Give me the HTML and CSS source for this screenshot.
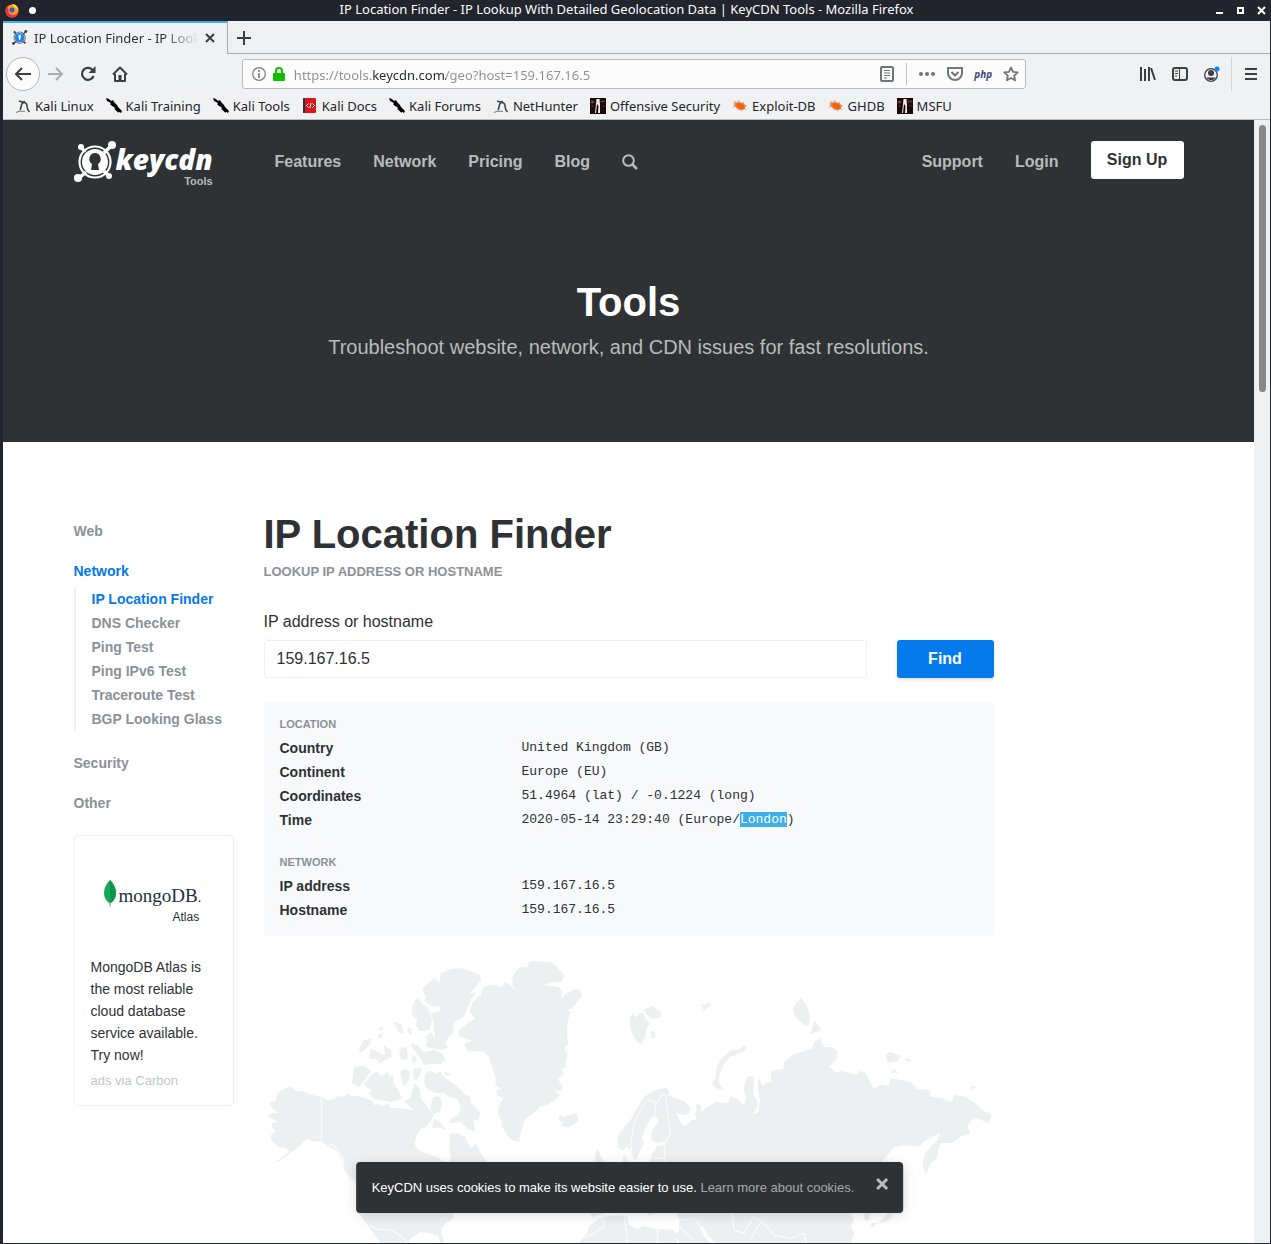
FILE: index.html
```html
<!DOCTYPE html>
<html lang="en">
<head>
<meta charset="utf-8">
<meta name="viewport" content="width=device-width, initial-scale=1">
<title>IP Location Finder - IP Lookup With Detailed Geolocation Data | KeyCDN Tools</title>
<link rel="stylesheet" href="styles.css">
</head>
<body>
<svg class="defs" aria-hidden="true">
  <defs>
    <symbol id="kali" viewBox="0 0 16 16"><path d="M4 3 7 4 10 3.500M7 5.500C9 3 12 5 12 8c0 3 .5 4 2.500 6M7 5.500c-1 2-.7 4-2 6.500" fill="none" stroke="#444" stroke-width="1.600"/><path d="M1 14.500c3-1.500 7-1.500 9-1" fill="none" stroke="#888" stroke-width="1.200"/></symbol>
    <symbol id="knife" viewBox="0 0 16 16"><path d="M0 0 3 1 5 3 7 2 8 4 11 7 12 9 16 13 15 15 12 13 8 9 6 8 4 6 5 5 1 3Z" fill="#000"/><path d="M9 10 13 14" stroke="#000" stroke-width="2"/></symbol>
    <symbol id="docs" viewBox="0 0 16 16"><rect x="1" width="13" height="15" rx="1" fill="#d8141c"/><path d="M1 0h2v15H1z" fill="#26324f"/><path d="M6.500 5.500 4.500 7.500 6.500 9.500M10.500 5.500 12.500 7.500 10.500 9.500M9 5 8 10" fill="none" stroke="#fff"/></symbol>
    <symbol id="offsec" viewBox="0 0 16 16"><path d="M0 0h16v16H0z" fill="#1b0909"/><path d="M1 3h3v2H1zM11 3h4v1h-4zM1 8h3M12 8h3" fill="#786060" stroke="#5c2a2a"/><path d="M6.500 1h3l.5 6v8H8l.5-7L7 6l-1 9H5l1-9z" fill="#eee"/></symbol>
    <symbol id="bug" viewBox="0 0 16 16"><ellipse cx="8" cy="8" rx="5.500" ry="3.500" transform="rotate(22 8 8)" fill="#ee6411"/><path d="M2 3 5 6 1 6M6 2 8 5M1 9 5 8M6 12 7 9M10 13 9 11M14 12 12 10M11 4 12 7 15 8" fill="none" stroke="#f08a4c"/></symbol>
    <symbol id="keyhole" viewBox="0 0 44 44"><g fill="none" stroke="currentColor"><circle cx="21" cy="21" r="15.500" stroke-width="2.200"/><path d="M7 6 11 11M37 5 30 12M4 38 12 31M35 35 30 30" stroke-width="3.600"/></g><g fill="currentColor"><circle cx="7" cy="6" r="3"/><circle cx="38" cy="4" r="4"/><circle cx="4" cy="37" r="4"/><circle cx="35" cy="35" r="3"/></g></symbol>
  </defs>
</svg>

<div class="window">
  <header class="titlebar">
    <div class="titlebar-side">
      <svg width="14" height="14" viewBox="0 0 14 14" aria-hidden="true"><circle cx="7" cy="7" r="6.500" fill="#ff9a1f"/><path d="M1 4C0 10 3 13.500 7 13.500s6.500-3 6.500-7c-1 3-3 5-6 4.500S3 8 3.500 5L2 2Z" fill="#f0304a"/><circle cx="7" cy="6" r="2.500" fill="#3454c8"/><path d="M7 0c3 0 6 2 6.500 6C12 4 10 4 9 3Z" fill="#ffdc3c"/></svg>
      <span class="dot"></span>
    </div>
    <div class="titlebar-text">IP Location Finder - IP Lookup With Detailed Geolocation Data | KeyCDN Tools - Mozilla Firefox</div>
    <div class="titlebar-side titlebar-buttons">
      <button aria-label="Minimize"><svg width="9" height="9"><path d="M1 7h7" stroke="#fff" stroke-width="2"/></svg></button>
      <button aria-label="Maximize"><svg width="9" height="9"><rect x="2" y="2" width="5" height="5" fill="none" stroke="#fff" stroke-width="2"/></svg></button>
      <button aria-label="Close window"><svg width="9" height="9"><path d="M1 1 8 8M8 1 1 8" stroke="#fff" stroke-width="2"/></svg></button>
    </div>
  </header>

  <div class="tabbar">
    <div class="tab">
      <svg class="tab-icon" width="16" height="16" viewBox="0 0 44 44" aria-hidden="true"><g color="#3c4248"><use href="#keyhole"/></g><circle cx="21" cy="21" r="13" fill="#1d84f0"/><path d="M18 13h6v8l-2 7h-2l-2-7z" fill="#fff"/></svg>
      <span class="tab-title">IP Location Finder - IP Look</span>
      <button aria-label="Close tab"><svg width="10" height="10"><path d="M1 1 9 9M9 1 1 9" stroke="#3c3e42" stroke-width="2"/></svg></button>
    </div>
    <button class="new-tab" aria-label="New tab"><svg width="14" height="14"><path d="M7 0v14M0 7h14" stroke="#3c3e42" stroke-width="2"/></svg></button>
  </div>

  <div class="toolbar">
    <button class="back" aria-label="Back"><svg width="18" height="16" viewBox="0 0 18 16"><path d="M17 8H2M8 2 2 8l6 6" fill="none" stroke="#3c3e42" stroke-width="2"/></svg></button>
    <button class="tool" aria-label="Forward"><svg width="16" height="16" viewBox="0 0 16 16"><path d="M0 8h14M8 2l6 6-6 6" fill="none" stroke="#aaacae" stroke-width="2"/></svg></button>
    <button class="tool" aria-label="Reload"><svg width="16" height="16" viewBox="0 0 16 16"><path d="M13 4.500A6 6 0 1 0 13.600 10" fill="none" stroke="#3c3e42" stroke-width="2.200"/><path d="M15.500 0v7h-7z" fill="#3c3e42"/></svg></button>
    <button class="tool" aria-label="Home"><svg width="16" height="16" viewBox="0 0 16 16"><path d="M1 8.500 8 1.500l7 7M3 8v7h10V8" fill="none" stroke="#3c3e42" stroke-width="2" stroke-linejoin="round"/><path d="M6.500 9h3v6h-3z" fill="#3c3e42"/></svg></button>
    <div class="spacer"></div>
    <div class="urlbar">
      <svg width="14" height="14" viewBox="0 0 14 14" aria-hidden="true"><circle cx="7" cy="7" r="6.300" fill="none" stroke="#7b7c7e" stroke-width="1.200"/><path d="M7 6v5M7 3v2" stroke="#7b7c7e" stroke-width="1.600"/></svg>
      <svg width="12" height="14" viewBox="0 0 12 14" aria-hidden="true"><path d="M3 7V4a3 3 0 0 1 6 0v3" fill="none" stroke="#12bc00" stroke-width="2"/><rect y="6" width="12" height="8" rx="1" fill="#12bc00"/></svg>
      <input type="text" aria-label="Address" value="https://tools.keycdn.com/geo?host=159.167.16.5">
      <div class="url-actions">
        <button aria-label="Reader view"><svg width="14" height="16"><rect x="1" y="1" width="12" height="14" rx="1" fill="none" stroke="#737476" stroke-width="2"/><path d="M4 4.500h6M4 7h6M4 9.500h6M4 12h3" stroke="#737476"/></svg></button>
        <span class="rule"></span>
        <button aria-label="Page actions"><svg width="16" height="4" fill="#737476"><circle cx="2" cy="2" r="2"/><circle cx="8" cy="2" r="2"/><circle cx="14" cy="2" r="2"/></svg></button>
        <button aria-label="Save to Pocket"><svg width="16" height="14" viewBox="0 0 16 14"><path d="M1 1h14v5a7 7 0 0 1-14 0zM4.500 5 8 8.500 11.500 5" fill="none" stroke="#737476" stroke-width="2" stroke-linejoin="round"/></svg></button>
        <button class="php">php</button>
        <button aria-label="Bookmark"><svg width="16" height="16" viewBox="0 0 16 16"><path d="m8 1.500 2 4.300 4.700.6-3.500 3.200.9 4.700L8 12l-4.100 2.300.9-4.700L1.300 6.400 6 5.800z" fill="none" stroke="#737476" stroke-width="1.800" stroke-linejoin="round"/></svg></button>
      </div>
    </div>
    <div class="spacer"></div>
    <button class="tool" aria-label="Library"><svg width="16" height="14"><path d="M1 0v14M5 2v12M9 0v14M11 1l4 12" stroke="#3c3e42" stroke-width="2"/></svg></button>
    <button class="tool" aria-label="Sidebars"><svg width="16" height="14"><rect x="1" y="1" width="14" height="12" rx="2" fill="none" stroke="#3c3e42" stroke-width="2"/><path d="M7.500 1v12M3 4h3M3 6.500h3M3 9h2" stroke="#3c3e42"/></svg></button>
    <button class="tool" aria-label="Account"><svg width="16" height="16"><circle cx="7" cy="9" r="6.300" fill="none" stroke="#3c3e42" stroke-width="1.300"/><circle cx="7" cy="7" r="3" fill="#3c3e42"/><path d="M2.500 11.500h9C10 14 8.500 14 7 14s-3.500-.5-4.500-2.500" fill="#3c3e42"/><circle cx="13" cy="3" r="2.500" fill="#0a84ff"/></svg></button>
    <span class="rule rule-tall"></span>
    <button class="tool menu" aria-label="Menu"><svg width="12" height="12"><path d="M0 1h12M0 6h12M0 11h12" stroke="#3c3e42" stroke-width="2"/></svg></button>
  </div>

  <nav class="bookmarks" aria-label="Bookmarks">
    <a href="#"><svg><use href="#kali"/></svg>Kali Linux</a>
    <a href="#"><svg><use href="#knife"/></svg>Kali Training</a>
    <a href="#"><svg><use href="#knife"/></svg>Kali Tools</a>
    <a href="#"><svg><use href="#docs"/></svg>Kali Docs</a>
    <a href="#"><svg><use href="#knife"/></svg>Kali Forums</a>
    <a href="#"><svg><use href="#kali"/></svg>NetHunter</a>
    <a href="#"><svg><use href="#offsec"/></svg>Offensive Security</a>
    <a href="#"><svg><use href="#bug"/></svg>Exploit-DB</a>
    <a href="#"><svg><use href="#bug"/></svg>GHDB</a>
    <a href="#"><svg><use href="#offsec"/></svg>MSFU</a>
  </nav>

  <div class="viewport">
    <div class="page">
      <div class="hero">
        <div class="container">
          <nav class="site-nav" aria-label="Main">
            <a class="brand" href="#">
              <svg width="42" height="42" viewBox="0 0 42 42" aria-hidden="true"><use href="#keyhole" width="44" height="44"/><circle cx="21" cy="21" r="13" fill="#fff"/><path d="M21 12a6 6 0 0 1 3 11l1 6h-8l1-6a6 6 0 0 1 3-11z" fill="#2e3235"/></svg>
              <span class="brand-text"><span class="brand-name">keycdn</span><span class="brand-sub">Tools</span></span>
            </a>
            <a class="nav-link" href="#">Features</a>
            <a class="nav-link" href="#">Network</a>
            <a class="nav-link" href="#">Pricing</a>
            <a class="nav-link" href="#">Blog</a>
            <a class="nav-link" href="#" aria-label="Search"><svg width="16" height="16" viewBox="0 0 16 16"><circle cx="6.500" cy="6.500" r="5.300" fill="none" stroke="currentColor" stroke-width="2"/><path d="m10.500 10.500 4.500 4.500" stroke="currentColor" stroke-width="2.500"/></svg></a>
            <div class="nav-right">
              <a class="nav-link" href="#">Support</a>
              <a class="nav-link" href="#">Login</a>
              <button class="sign-up">Sign Up</button>
            </div>
          </nav>
          <div class="hero-copy">
            <h2>Tools</h2>
            <p>Troubleshoot website, network, and CDN issues for fast resolutions.</p>
          </div>
        </div>
      </div>

      <div class="container columns">
        <aside class="sidebar">
          <nav class="side-nav" aria-label="Tools">
            <a href="#">Web</a>
            <div>
              <a class="active" href="#">Network</a>
              <ul>
                <li><a class="active" href="#">IP Location Finder</a></li>
                <li><a href="#">DNS Checker</a></li>
                <li><a href="#">Ping Test</a></li>
                <li><a href="#">Ping IPv6 Test</a></li>
                <li><a href="#">Traceroute Test</a></li>
                <li><a href="#">BGP Looking Glass</a></li>
              </ul>
            </div>
            <a href="#">Security</a>
            <a href="#">Other</a>
          </nav>
          <div class="ad">
            <a class="ad-logo" href="#">
              <svg width="14" height="28" viewBox="0 0 14 28" aria-hidden="true"><path d="M7 0c4 4 6 8 6 13 0 4-2 8-5.500 10L7 27l-.5-4C3 21 1 17 1 13 1 8 3 4 7 0z" fill="#13aa52"/><path d="M7 0c4 4 6 8 6 13 0 4-2 8-5.500 10H7z" fill="#11944a"/><path d="M7 22v5" stroke="#9aa79f"/></svg>
              <span class="mongo"><span class="mongo-name">mongoDB<small>.</small></span><span class="mongo-sub">Atlas</span></span>
            </a>
            <p><a href="#">MongoDB Atlas is the most reliable cloud database service available. Try now!</a></p>
            <a class="ad-via" href="#">ads via Carbon</a>
          </div>
        </aside>

        <main class="main">
          <h1>IP Location Finder</h1>
          <p class="eyebrow">LOOKUP IP ADDRESS OR HOSTNAME</p>
          <form class="lookup">
            <div class="field">
              <label for="host">IP address or hostname</label>
              <input id="host" type="text" value="159.167.16.5">
            </div>
            <button type="button">Find</button>
          </form>
          <section class="results">
            <h3>LOCATION</h3>
            <dl>
              <dt>Country</dt><dd>United Kingdom (GB)</dd>
              <dt>Continent</dt><dd>Europe (EU)</dd>
              <dt>Coordinates</dt><dd>51.4964 (lat) / -0.1224 (long)</dd>
              <dt>Time</dt><dd>2020-05-14 23:29:40 (Europe/<mark>London</mark>)</dd>
            </dl>
            <h3>NETWORK</h3>
            <dl>
              <dt>IP address</dt><dd>159.167.16.5</dd>
              <dt>Hostname</dt><dd>159.167.16.5</dd>
            </dl>
          </section>
          <svg class="map" viewBox="0 30 2190 1100" role="img" aria-label="World map">
            <g class="land">
              <path d="M10 500 22 490 44 488 28 478 16 458 36 452 40 430 60 418 78 410 96 422 116 424 140 434 170 440 198 452 222 438 240 440 252 428 262 440 278 436 300 444 324 452 330 466 344 460 352 470 372 460 380 474 404 474 444 480 470 468 476 452 490 470 500 480 510 496 500 512 486 530 470 536 456 560 452 584 464 600 490 612 520 620 536 634 552 636 562 626 556 600 558 572 556 552 580 548 604 560 612 580 622 596 634 580 644 596 652 612 668 636 700 660 700 740 566 790 566 806 540 824 530 840 540 876 530 880 522 856 496 850 470 846 440 864 432 882 360 960 350 880 320 838 300 812 286 790 280 700 258 686 240 656 236 632 220 604 190 588 172 574 150 574 128 568 104 590 96 596 72 616 44 634 26 640 48 626 76 604 60 592 44 590 22 572 20 556 36 542 22 530 24 518 44 516 30 508Z"/>
              <path d="M650 124 660 110 688 104 716 112 722 94 744 110 760 126 746 104 744 86 756 62 770 52 790 50 796 36 812 32 864 38 880 52 900 76 892 96 868 96 836 104 886 112 894 124 890 148 910 128 934 116 950 122 954 136 940 156 922 176 908 180 920 184 912 210 908 240 912 280 900 296 910 310 904 340 908 350 892 358 900 368 890 380 882 388 896 410 892 424 872 420 878 432 890 432 876 448 850 464 830 468 812 486 790 504 780 516 774 540 768 556 766 576 744 570 730 556 714 530 712 512 702 490 708 460 718 444 698 436 698 420 714 418 694 406 696 386 684 352 676 320 660 304 612 304 600 282 624 272 586 258 584 240 608 222 634 206 616 184 626 160 640 140 652 136Z"/>
              <path d="M474 116 490 100 512 84 526 98 530 70 556 58 588 54 620 64 648 76 652 90 640 104 618 130 636 128 620 150 608 180 596 204 572 214 566 240 568 250 552 262 544 280 552 292 530 300 486 290 490 270 484 262 500 246 514 266 508 214 500 190 530 182 528 170 500 168 482 154 486 140Z"/>
              <path d="M456 146 464 144 470 160 490 172 496 184 504 210 496 240 468 244 456 226 460 208 444 196 444 172ZM388 216 412 222 420 250 404 246ZM430 230 444 238 444 254 432 250ZM352 230 360 236 348 242 344 236ZM342 254 358 248 354 264 342 264ZM284 300 300 270 322 266 318 284 292 308ZM316 324 320 296 350 310 362 316 360 284 380 300 384 320 360 332 340 342 344 330ZM408 296 428 290 432 326 414 330 406 316ZM444 322 452 316 460 332 446 340ZM440 280 460 286 480 306 510 300 536 312 544 328 530 342 480 344 466 320 444 292Z"/>
              <path d="M270 350 300 348 322 362 304 386 286 412 264 400ZM300 400 324 374 340 364 350 380 372 366 376 384 388 372 388 400 404 424 414 446 380 456 330 448 314 430 326 420 304 410ZM408 364 424 356 438 366 436 390 420 408 412 384ZM448 356 474 352 468 376 456 392 448 380ZM450 400 466 412 470 440 478 470 446 478 420 454 440 444ZM484 372 500 362 520 372 530 362 536 378 556 392 580 410 600 430 618 440 620 460 640 476 650 490 640 512 628 510 634 546 610 536 590 516 556 520 556 508 584 496 590 468 580 446 560 444 540 430 510 428 486 414 480 390ZM540 362 562 374 544 376ZM508 440 528 440 536 462 526 486 508 492 498 470ZM510 506 530 520 548 540 520 532 504 536ZM886 494 902 500 920 494 940 490 944 512 914 532 890 526 900 518 884 510ZM994 604 1004 598 1008 612 1020 636 994 636Z"/>
              <g transform="translate(1080)">
                <path d="M-16 552-20 590-4 602 8 590 18 600 24 622 36 630 50 600 60 580 54 560 66 530 82 502 100 500 104 516 84 540 82 570 100 578 126 574 118 586 96 590 94 600 82 612 80 640 60 700 160 740 160 796 166 812 164 846 150 850 168 882 200 960 660 960 680 882 690 850 680 828 690 812 680 788 760 700 774 636 790 616 808 592 840 586 888 590 900 574 934 556 950 546 940 570 916 596 900 616 896 650 906 672 920 640 940 624 942 600 950 580 984 578 1010 560 1040 548 1030 530 1040 512 1060 504 1092 520 1104 496 1076 480 1050 456 1024 440 990 434 984 456 960 446 920 440 918 420 880 416 860 396 800 384 796 408 770 404 750 416 734 390 726 370 706 362 700 374 650 362 640 370 616 350 640 324 640 304 624 290 600 292 592 276 588 264 570 276 564 294 540 304 510 312 480 336 478 356 442 362 442 398 434 396 414 408 404 380 400 410 408 450 404 486 384 494 400 470 400 450 388 436 390 400 388 378 370 380 358 420 368 440 360 466 340 448 320 440 310 460 276 456 250 472 232 486 230 464 216 460 218 484 212 490 218 508 200 512 194 520 180 528 172 520 156 490 180 496 196 490 198 470 180 452 152 444 130 436 136 426 128 414 104 418 84 426 64 438 40 470 20 510 0 532Z"/>
                <path d="M16 200 30 190 38 204 44 190 58 188 62 202 78 222 66 236 64 262 50 284 36 272 20 240ZM58 180 80 170 88 166 94 178 114 184 108 204 84 206 74 200ZM80 244 90 242 96 262 80 266ZM228 166 244 164 256 156 262 166 250 172 240 184 236 172ZM506 178 516 158 532 144 546 166 558 196 556 226 544 228 516 204ZM572 212 590 236 586 244 558 252ZM264 402 276 380 278 350 296 322 316 304 344 298 360 286 368 290 358 306 320 320 300 342 288 370 284 396 298 420 280 416ZM786 312 800 306 828 318 824 332 796 338 786 328ZM840 322 864 330 850 336ZM804 362 814 358 822 370 802 368ZM1038 412 1050 406 1058 412 1044 418ZM780 800 806 780 804 804 790 814 764 820ZM740 820 762 818 744 834ZM720 780 736 790 734 812 722 810ZM-4 620 4 612 12 640-2 640Z"/>
                <path d="M-140 882-110 850-106 830-76 806-60 800-10 796 10 800 14 824 40 836 60 828 100 836 150 840 160 882 200 960-140 960ZM-106 780-60 780-62 792-96 800ZM60 780 76 796 100 790 110 780Z"/>
              </g>
            </g>
            <path class="borders" d="M172 438V574L190 590 206 584 222 602 236 622 240 646M258 680 276 694M316 826 340 838 380 840 410 856 432 880M1106 630 1100 580 1110 520 1130 480 1150 450 1170 456 1176 480 1170 510M1150 450 1180 460 1194 434 1206 434 1208 470 1220 546 1206 576 1200 600 1204 640M1164 624 1200 626M1240 820 1250 810 1290 806 1310 830 1330 860M1404 790 1410 840 1440 850 1470 800 1510 830 1530 856 1580 866 1620 850 1626 880M1460 870 1480 830 1500 810M1000 796 1020 810 1018 830 980 856 940 870M1080 800 1088 850 1090 882M1180 836V882M1246 830 1290 870"/>
            <path class="gulf" d="M1312 830 1328 860 1350 882"/>
          </svg>
        </main>
      </div>
    </div>
    <div class="scrollbar" aria-hidden="true"><span></span></div>
    <div class="cookies" role="dialog" aria-label="Cookies">
      <p>KeyCDN uses cookies to make its website easier to use. <a href="#">Learn more about cookies.</a></p>
      <button aria-label="Dismiss"><svg width="14" height="14"><path d="M2 2l10 10M12 2 2 12" stroke="#b9bbbc" stroke-width="3"/></svg></button>
    </div>
  </div>
</div>
</body>
</html>
```
FILE: styles.css
```css
* { box-sizing: border-box; }

body {
  margin: 0;
  font-family: "Liberation Sans", Arial, sans-serif;
  font-size: 16px;
  line-height: 24px;
  color: #2e3235;
}

h1, h2, h3, p, ul, dl, dd { margin: 0; padding: 0; }
ul { list-style: none; }
a { color: inherit; text-decoration: none; }
button {
  padding: 0;
  border: 0;
  background: none;
  font: inherit;
  color: inherit;
}
svg { display: block; flex: none; }
.defs { position: absolute; width: 0; height: 0; }

/* Browser window */
.window {
  display: flex;
  flex-direction: column;
  height: 100vh;
  overflow: hidden;
  border: solid #22242e;
  border-width: 0 1px 1px 3px;
  background: #eff0f1;
}
.titlebar, .tabbar, .toolbar, .bookmarks {
  flex: none;
  display: flex;
  align-items: center;
  font-family: "Noto Sans", sans-serif;
  font-size: 13px;
  line-height: 18px;
}
.titlebar {
  height: 21px;
  background: #22242e;
  color: #fcfcfc;
}
.titlebar-side {
  display: flex;
  align-items: center;
  gap: 10px;
  width: 64px;
  padding-left: 2px;
}
.titlebar-text { flex: 1; text-align: center; padding: 0 20px 3px 0; }
.titlebar-buttons { justify-content: flex-end; gap: 12px; padding-right: 4px; }
.dot { width: 7px; height: 7px; border-radius: 50%; background: #fff; }

.tabbar {
  height: 33px;
  align-items: stretch;
  box-shadow: inset 0 -1px #a9abad;
}
.tab {
  display: flex;
  align-items: center;
  gap: 6px;
  width: 225px;
  padding: 0 12px 2px 9px;
  border-top: 2px solid #3daee9;
  border-right: 1px solid #a9abad;
  background: #f0f1f3;
}
.tab-title {
  flex: 1;
  overflow: hidden;
  white-space: nowrap;
  mask-image: linear-gradient(to left, transparent, #000 36px);
}
.new-tab { padding: 0 9px; }

.toolbar { height: 40px; padding: 0 3px; background: #f0f1f3; }
.back {
  display: grid;
  place-items: center;
  width: 34px;
  height: 34px;
  border: 1px solid #b4b6b8;
  border-radius: 50%;
  background: #fcfcfc;
}
.tool { display: grid; place-items: center; width: 32px; height: 32px; }
.spacer { flex: 4; }
.urlbar {
  flex: 29;
  display: flex;
  align-items: center;
  gap: 7px;
  height: 30px;
  padding: 0 6px 0 9px;
  border: 1px solid #b9bbbd;
  border-radius: 3px;
  background: #fcfcfc;
}
.urlbar input {
  flex: 1;
  min-width: 0;
  padding: 2px 0 0 2px;
  border: 0;
  font: inherit;
  color: #8e8f91;
  background: linear-gradient(to right, #8e8f91 80px, #232629 80px 154px, #8e8f91 154px);
  background-clip: text;
  -webkit-background-clip: text;
  -webkit-text-fill-color: transparent;
}
.url-actions { display: flex; align-items: center; gap: 12px; }
.php {
  width: 16px;
  display: flex;
  justify-content: center;
  color: #3b4680;
  font-size: 10px;
  font-weight: 700;
  font-style: italic;
}
.rule { width: 1px; height: 22px; background: #c3c4c6; }
.rule-tall { height: 34px; margin: 0 3px; background: #d2d3d5; }

.bookmarks {
  gap: 12px;
  height: 26px;
  padding: 0 12px 2px;
  border-bottom: 1px solid #b9bbbd;
  background: #f0f1f3;
  color: #232629;
}
.bookmarks a { display: flex; align-items: center; gap: 4px; white-space: nowrap; }
.bookmarks svg { width: 16px; height: 16px; }

/* Page area */
.viewport {
  position: relative;
  flex: 1;
  display: flex;
  min-height: 0;
}
.page { flex: 1; min-width: 0; overflow: hidden; background: #fff; }
.scrollbar { width: 16px; padding: 5px 4px; background: #eff0f1; }
.scrollbar span {
  display: block;
  width: 7px;
  height: 24%;
  margin-left: 1px;
  border-radius: 4px;
  background: #86888a;
}
.container { max-width: 1140px; margin: 0 auto; padding: 0 15px; }

.hero { padding: 21px 0 80px; background: #2e3235; }
.site-nav {
  display: flex;
  align-items: flex-start;
  gap: 32px;
  color: #b9bbbc;
  font-weight: 700;
}
.brand { display: flex; width: 137px; margin-right: 32px; color: #fff; }
.brand-text { display: flex; flex-direction: column; align-items: flex-end; flex: 1; }
.brand-name {
  font-family: "Open Sans", sans-serif;
  font-size: 28px;
  line-height: 36px;
  font-weight: 800;
  font-style: italic;
}
.brand-sub { font-size: 11px; line-height: 8px; color: #b9bbbc; }
.nav-link { display: flex; align-items: center; height: 42px; }
.nav-right { display: flex; gap: 32px; margin-left: auto; }
.sign-up {
  height: 38px;
  width: 93px;
  border-radius: 3px;
  background: #fff;
  color: #2e3235;
}
.hero-copy { padding-top: 93px; text-align: center; }
.hero-copy h2 { font-size: 40px; line-height: 48px; color: #fff; }
.hero-copy p { margin-top: 6px; font-size: 20px; line-height: 30px; color: #b9bbbc; }

.columns { display: grid; grid-template-columns: 2fr 8fr 2fr; padding: 68px 0 0; }
.sidebar { padding: 9px 15px 0; }
.main { padding: 0 15px; }

.side-nav {
  display: flex;
  flex-direction: column;
  gap: 16px;
  font-size: 14px;
  font-weight: 700;
  color: #8b9197;
}
.side-nav .active { color: #047aed; }
.side-nav ul {
  margin: 4px 0;
  padding-left: 16px;
  border-left: 2px solid #edeff0;
  white-space: nowrap;
}

.ad {
  margin-top: 20px;
  padding: 16px 16px 14px;
  border: 1px solid #edeff0;
  border-radius: 4px;
  font-size: 14px;
  line-height: 22px;
}
.ad-logo { display: flex; align-items: flex-start; height: 100px; margin: 0 0 4px 12px; padding-top: 28px; }
.mongo { display: flex; flex-direction: column; padding: 6px 0 0 2px; color: #21313c; }
.mongo-name { font-family: "Liberation Serif", serif; font-size: 19px; line-height: 20px; }
.mongo-name small { font-size: 14px; }
.mongo-sub { align-self: flex-end; padding-right: 2px; font-size: 12px; line-height: 18px; }
.ad-via { display: block; margin-top: 5px; font-size: 13px; line-height: 20px; color: #c2c6ca; }

.main h1 { font-size: 40px; line-height: 48px; }
.eyebrow {
  margin-top: 4px;
  font-size: 13px;
  line-height: 20px;
  font-weight: 700;
  color: #8b9197;
}
.lookup {
  display: flex;
  align-items: flex-end;
  gap: 30px;
  margin: 28px 0 24px;
}
.field { flex: 1; }
.field label { display: block; }
.field input {
  display: block;
  width: 100%;
  height: 38px;
  margin-top: 6px;
  padding: 0 12px;
  border: 1px solid #edeff0;
  border-radius: 3px;
  font: inherit;
  color: #2e3235;
}
.lookup button {
  width: 97px;
  height: 38px;
  border-radius: 3px;
  background: #047aed;
  box-shadow: 0 2px 4px #0000001f;
  color: #fff;
  font-weight: 700;
}

.results {
  margin-bottom: 24px;
  padding: 10px 16px 14px;
  border-radius: 4px;
  background: #f7f9fa;
}
.results h3 { font-size: 11px; line-height: 24px; color: #8b9197; }
.results dl { display: grid; grid-template-columns: 1fr 2fr; column-gap: 14px; }
.results dl + h3 { margin-top: 18px; }
.results dt { font-size: 14px; font-weight: 700; }
.results dd { font-family: "Liberation Mono", monospace; font-size: 13px; }
mark { background: #3daee9; color: #fff; }

.map { width: 100%; height: auto; }
.land { fill: #eeeff1; }
.borders { fill: none; stroke: #fff; stroke-width: 3; }
.gulf { fill: none; stroke: #fff; stroke-width: 10; }

.cookies {
  position: absolute;
  left: 50%;
  bottom: 30px;
  transform: translateX(-50%);
  display: flex;
  align-items: center;
  gap: 21px;
  margin-left: -7px;
  padding: 14px 14px 13px 16px;
  border-radius: 4px;
  background: #2e3235;
  box-shadow: 0 2px 12px #00000026;
  color: #fff;
  font-size: 13px;
  white-space: nowrap;
}
.cookies a { color: #a5a8aa; }
.cookies button { padding-bottom: 8px; }
```
